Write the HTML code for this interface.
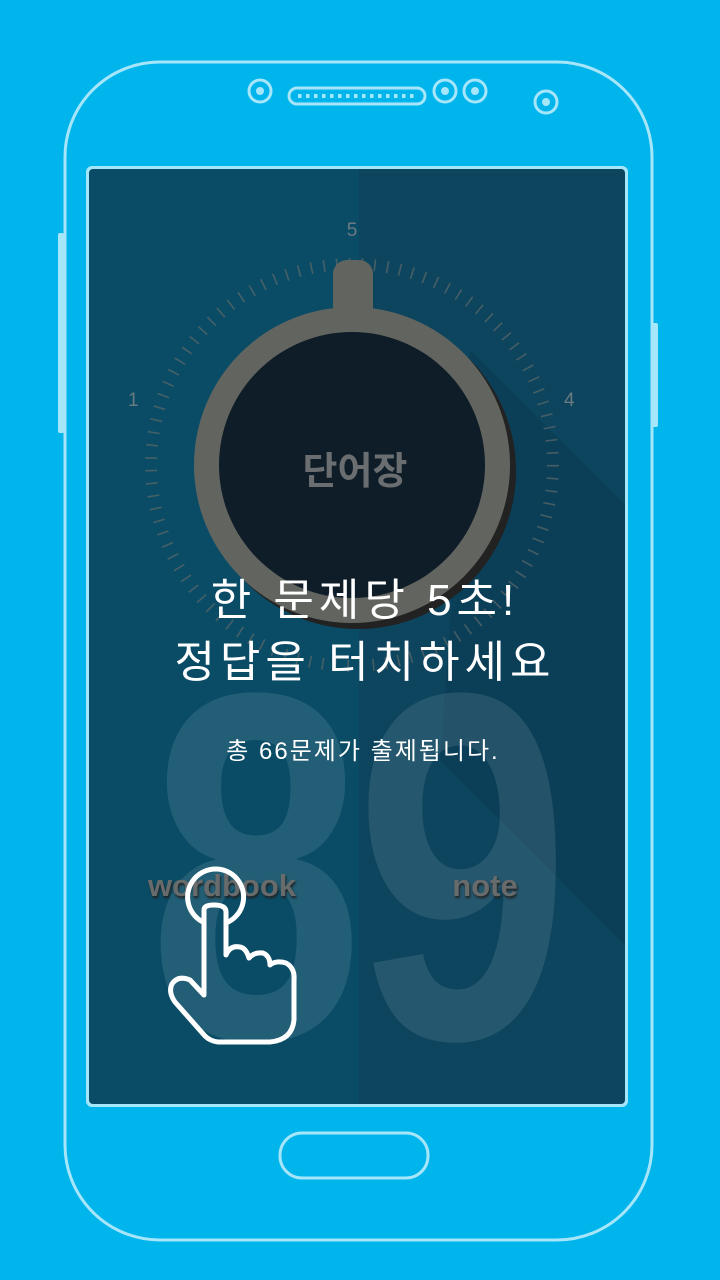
<!DOCTYPE html>
<html><head><meta charset="utf-8"><style>
html,body{margin:0;padding:0;width:720px;height:1280px;overflow:hidden;background:#00b4ec;}
.abs{position:absolute;}
.txt{font-family:"Liberation Sans","Noto Sans CJK KR",sans-serif;}
</style></head><body>
<svg class="abs" style="left:0;top:0" width="720" height="1280" viewBox="0 0 720 1280">
  <rect x="65" y="62" width="587" height="1178" rx="95" fill="none" stroke="#a6e6fa" stroke-width="3"/>
  <rect x="58" y="233" width="6" height="200" rx="2" fill="#a6e6fa"/>
  <rect x="652" y="323" width="6" height="104" rx="2" fill="#a6e6fa"/>
  <g fill="none" stroke="#a6e6fa" stroke-width="3">
    <circle cx="260" cy="91" r="11"/><circle cx="445" cy="91" r="11"/><circle cx="475" cy="91" r="11"/><circle cx="546" cy="102" r="11"/>
    <rect x="289" y="88" width="136" height="16" rx="8"/>
    <rect x="280" y="1133" width="148" height="45" rx="22"/>
  </g>
  <g fill="#a6e6fa"><circle cx="260" cy="91" r="4"/><circle cx="445" cy="91" r="4"/><circle cx="475" cy="91" r="4"/><circle cx="546" cy="102" r="4"/></g>
  <line x1="298" y1="96" x2="418" y2="96" stroke="#a6e6fa" stroke-width="4" stroke-dasharray="3.5 4.5"/>
  <rect x="86" y="166" width="542" height="941" rx="6" fill="#a6e6fa"/>
  <clipPath id="sc"><rect x="89" y="169" width="536" height="935" rx="4"/></clipPath>
  <g clip-path="url(#sc)">
    <rect x="89" y="169" width="270" height="935" fill="#0a4c66"/>
    <rect x="359" y="169" width="270" height="935" fill="#0d445e"/>
    <polygon points="470,350 640,520 640,960 440,760" fill="#0a3a52" opacity="0.5"/>
    <text x="0" y="0" transform="translate(355,1038) scale(0.86,1.1)" text-anchor="middle" font-family="Liberation Sans, sans-serif" font-weight="bold" font-size="450" fill="#ffffff" fill-opacity="0.1" letter-spacing="-10">89</text>
    <circle cx="352" cy="465" r="201" fill="none" stroke="#5f6a68" stroke-opacity="0.7" stroke-width="12" stroke-dasharray="1.6 11.15"/>
    <circle cx="358" cy="471" r="158" fill="#222"/>
    <rect x="333" y="260" width="40" height="80" rx="14" fill="#62655f"/>
    <circle cx="352" cy="465" r="158" fill="#62655f"/>
    <circle cx="352" cy="465" r="133" fill="#0f1d28"/>
  </g>
</svg>
<div class="abs txt" style="left:0;width:704px;top:220px;text-align:center;color:#6a7a80;font-size:19px">5</div>
<div class="abs txt" style="left:128px;top:390px;color:#6a7a80;font-size:19px">1</div>
<div class="abs txt" style="left:564px;top:390px;color:#6a7a80;font-size:19px">4</div>
<div class="abs txt" style="left:255px;width:200px;top:440px;text-align:center;color:#6a6e70;font-size:38px;font-weight:bold">단어장</div>
<div class="abs txt" style="left:0;width:730px;top:570px;text-align:center;color:#fff;font-size:44px;line-height:62px;letter-spacing:5px">한 문제당 5초!<br>정답을 터치하세요</div>
<div class="abs txt" style="left:0;width:726px;top:731px;text-align:center;color:#fff;font-size:24px;letter-spacing:2px">총 66문제가 출제됩니다.</div>
<div class="abs txt" style="left:122px;width:200px;top:868px;text-align:center;color:#676b6b;font-size:31px;font-weight:bold;text-shadow:1px 2px 2px #222">wordbook</div>
<div class="abs txt" style="left:385px;width:200px;top:868px;text-align:center;color:#676b6b;font-size:31px;font-weight:bold;text-shadow:1px 2px 2px #222">note</div>
<svg class="abs" style="left:0;top:0" width="720" height="1280" viewBox="0 0 720 1280">
  <g fill="none" stroke="#fff" stroke-width="5" stroke-linejoin="round" stroke-linecap="round">
    <path d="M203,922 A28,28 0 1 1 226,923"/>
    <path d="M204,995 L204,910 Q204,905 214,905 Q226,905 226,912 L226,955 Q230,945 240,947 Q246,948 249,958 Q254,952 263,953 Q270,956 270,965 Q276,960 286,963 Q295,968 294,980 L294,1020 Q292,1040 270,1042 L218,1042 Q210,1041 205,1036 L175,1002 Q168,992 172,984 Q178,975 190,980 Z"/>
  </g>
</svg>
</body></html>
